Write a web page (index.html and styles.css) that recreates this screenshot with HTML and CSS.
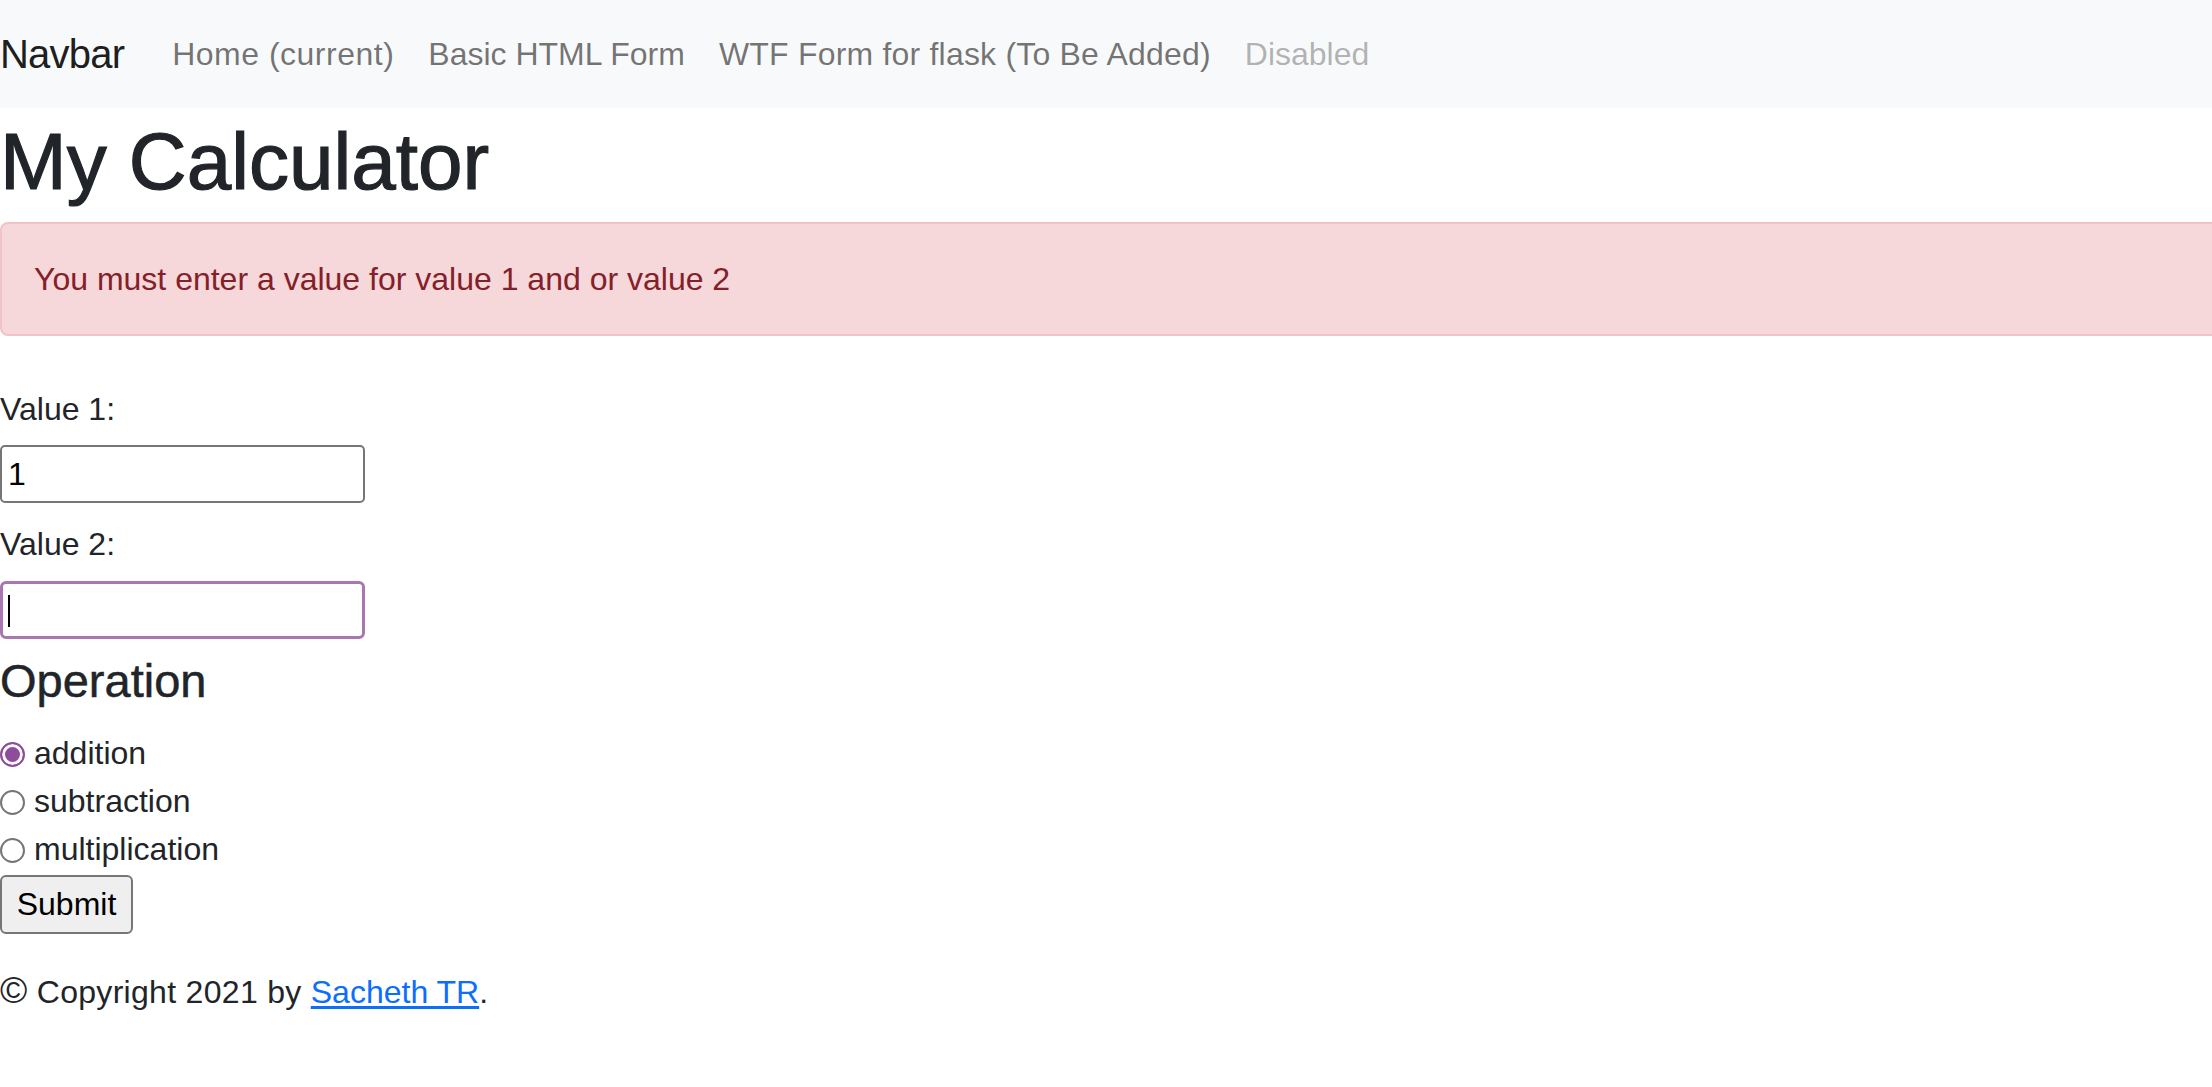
FILE: index.html
```html
<!DOCTYPE html>
<html lang="en">
<head>
<meta charset="utf-8">
<title>My Calculator</title>
<link rel="stylesheet" href="styles.css">
</head>
<body>
<nav class="navbar">
  <a class="brand" href="#">Navbar</a>
  <ul class="nav">
    <li><a class="nav-link home" href="#">Home (current)</a></li>
    <li><a class="nav-link" href="#">Basic HTML Form</a></li>
    <li><a class="nav-link wide" href="#">WTF Form for flask (To Be Added)</a></li>
    <li><span class="nav-link disabled">Disabled</span></li>
  </ul>
</nav>
<main class="page">
  <h1 class="title">My Calculator</h1>
  <div class="alert">You must enter a value for value 1 and or value 2</div>
  <form class="calc">
    <label class="field-label" for="v1">Value 1:</label>
    <input class="field" id="v1" type="text" value="1">
    <label class="field-label second" for="v2">Value 2:</label>
    <div class="field-wrap">
      <input class="field focused" id="v2" type="text" value="">
      <span class="caret"></span>
    </div>
    <h4 class="op-title">Operation</h4>
    <div class="radios">
      <label class="radio-row"><input class="radio" type="radio" name="op" checked><span>addition</span></label>
      <label class="radio-row"><input class="radio" type="radio" name="op"><span>subtraction</span></label>
      <label class="radio-row"><input class="radio" type="radio" name="op"><span>multiplication</span></label>
    </div>
    <button class="submit" type="button">Submit</button>
  </form>
  <p class="footer"><span class="copy">©</span> Copyright 2021 by <a class="footer-link" href="#">Sacheth TR</a>.</p>
</main>
</body>
</html>
```

FILE: styles.css
```css
* {
  box-sizing: border-box;
}

html, body {
  margin: 0;
  padding: 0;
  background: #ffffff;
  overflow-x: hidden;
}

body {
  font-family: "Liberation Sans", Arial, sans-serif;
  font-size: 32px;
  line-height: 48px;
  color: #212529;
}

.navbar {
  height: 108px;
  background: #f8f9fa;
  display: flex;
  align-items: center;
}

.brand {
  font-size: 40px;
  line-height: 60px;
  color: rgba(0, 0, 0, 0.9);
  text-decoration: none;
  margin-right: 31px;
  letter-spacing: -0.8px;
}

.nav {
  display: flex;
  list-style: none;
  margin: 0;
  padding: 0;
}

.nav-link {
  display: block;
  padding: 0 17px;
  font-size: 32px;
  line-height: 48px;
  color: rgba(0, 0, 0, 0.55);
  text-decoration: none;
}

.nav-link.home {
  letter-spacing: 0.5px;
}

.nav-link.wide {
  letter-spacing: 0.2px;
}

.nav-link.disabled {
  color: rgba(0, 0, 0, 0.3);
}

.page {
  display: block;
}

.title {
  margin: 6px 0 12px;
  font-size: 80px;
  line-height: 96px;
  font-weight: 500;
  color: #212529;
  -webkit-text-stroke: 1.2px #212529;
}

.alert {
  margin: 0 -40px 49px 0;
  padding: 31px 32px;
  background: #f6d7da;
  border: 2px solid #f1c2c7;
  border-radius: 8px;
  color: #842029;
  font-size: 32px;
  line-height: 48px;
}

.calc {
  margin: 0;
}

.field-label {
  display: block;
  font-size: 32px;
  line-height: 48px;
}

.field-label.second {
  margin-top: 17px;
}

.field {
  display: block;
  width: 365px;
  height: 58px;
  margin: 12px 0 0;
  padding: 0 6px;
  border: 2px solid #767676;
  border-radius: 5px;
  font-family: "Liberation Sans", Arial, sans-serif;
  font-size: 32px;
  color: #000000;
  background: #ffffff;
  outline: none;
}

.field-wrap {
  position: relative;
  width: 365px;
  margin-top: 13px;
}

.field-wrap .field {
  margin: 0;
}

.field.focused {
  border: 3px solid #a976b2;
  border-radius: 6px;
  caret-color: transparent;
}

.caret {
  position: absolute;
  left: 8px;
  top: 14px;
  width: 2px;
  height: 32px;
  background: #000000;
}

.op-title {
  margin: 13px 0 20px;
  font-size: 47px;
  line-height: 57px;
  font-weight: 500;
  color: #212529;
  -webkit-text-stroke: 0.5px #212529;
}

.radios {
  display: flex;
  flex-direction: column;
}

.radio-row {
  display: flex;
  align-items: center;
  height: 48px;
  font-size: 32px;
  line-height: 48px;
}

.radio {
  appearance: none;
  -webkit-appearance: none;
  width: 25px;
  height: 25px;
  margin: 2px 9px 0 0;
  border: 2px solid #767676;
  border-radius: 50%;
  background: #ffffff;
  flex: none;
}

.radio:checked {
  border: 2px solid #8f4b9c;
  background: #8f4b9c;
  box-shadow: inset 0 0 0 3px #ffffff;
}

.submit {
  display: block;
  margin-top: 2px;
  width: 133px;
  height: 59px;
  padding: 0;
  background: #efefef;
  border: 2px solid #767676;
  border-radius: 6px;
  font-family: "Liberation Sans", Arial, sans-serif;
  font-size: 32px;
  color: #000000;
}

.footer {
  margin: 34px 0 0;
  font-size: 32px;
  line-height: 48px;
  letter-spacing: 0.3px;
}

.copy {
  font-size: 37px;
  line-height: 1;
}

.footer-link {
  color: #0d6efd;
  text-decoration: underline;
  text-underline-offset: 3px;
  letter-spacing: 0;
}
```
